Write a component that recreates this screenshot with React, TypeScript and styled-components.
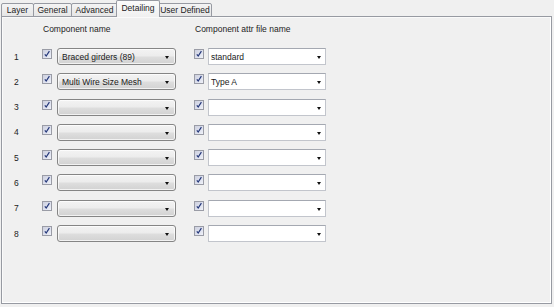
import styled, { createGlobalStyle } from "styled-components";

const GlobalStyle = createGlobalStyle`
  html, body {
    margin: 0;
    padding: 0;
    background: #f0f0f0;
  }
  body {
    font-family: "Liberation Sans", Arial, sans-serif;
    font-size: 8.5px;
    color: #1e1e1e;
  }
`;

const tabs = [
  { label: "Layer", width: 33 },
  { label: "General", width: 39 },
  { label: "Advanced", width: 47 },
  { label: "Detailing", width: 44 },
  { label: "User Defined", width: 54 },
];

const rows = [
  { name: "Braced girders (89)", attr: "standard" },
  { name: "Multi Wire Size Mesh", attr: "Type A" },
  { name: "", attr: "" },
  { name: "", attr: "" },
  { name: "", attr: "" },
  { name: "", attr: "" },
  { name: "", attr: "" },
  { name: "", attr: "" },
];

const Window = styled.div`
  width: 554px;
  height: 307px;
  padding-left: 1px;
  box-sizing: border-box;
  background: #f0f0f0;
`;

const TabStrip = styled.div`
  position: relative;
  z-index: 1;
  display: flex;
  align-items: flex-end;
  height: 17px;
`;

const Tab = styled.div<{ $width: number; $active?: boolean }>`
  box-sizing: border-box;
  width: ${(p) => p.$width}px;
  height: ${(p) => (p.$active ? 17 : 14)}px;
  margin-left: ${(p) => (p.$active ? -2 : -1)}px;
  margin-right: ${(p) => (p.$active ? -1 : 0)}px;
  position: relative;
  z-index: ${(p) => (p.$active ? 2 : 1)};
  border: 1px solid #979aa2;
  border-bottom: ${(p) => (p.$active ? "none" : "1px solid #979aa2")};
  border-radius: 2px 2px 0 0;
  background: ${(p) =>
    p.$active
      ? "linear-gradient(#fbfbfb, #f0f0f0)"
      : "linear-gradient(#f4f4f4, #e6e6e6)"};
  display: flex;
  align-items: center;
  justify-content: center;
  padding-bottom: ${(p) => (p.$active ? 2 : 0)}px;
  white-space: nowrap;
  color: #222;

  &:first-child {
    margin-left: 0;
  }
`;

const Panel = styled.div`
  box-sizing: border-box;
  width: 551px;
  height: 288px;
  margin-top: -1px;
  border: 1px solid #979aa2;
  box-shadow: inset -1px -1px 0 #ffffff, inset 1px 1px 0 #fafafa;
  background: #f0f0f0;
  padding: 7px 0 0 11px;
`;

const HeaderRow = styled.div`
  display: flex;
  height: 10px;
  line-height: 10px;
  color: #222;
`;

const HeaderCell = styled.div<{ $width: number }>`
  width: ${(p) => p.$width}px;
  flex: none;
`;

const RowList = styled.div`
  display: grid;
  grid-auto-rows: 17px;
  row-gap: 8.3px;
  margin-top: 14px;
`;

const Row = styled.div`
  display: flex;
  align-items: center;
`;

const Num = styled.div`
  width: 29px;
  flex: none;
  padding-left: 1px;
  box-sizing: border-box;
  color: #222;
`;

const CheckCell = styled.div<{ $width: number }>`
  width: ${(p) => p.$width}px;
  flex: none;
  display: flex;
  align-items: center;
  align-self: flex-start;
  padding-top: 1px;
`;

const CheckBox = styled.div`
  box-sizing: border-box;
  width: 10px;
  height: 10px;
  border: 1px solid #9a9ca6;
  background: linear-gradient(135deg, #cdd0de 0%, #dfe2ef 60%, #f0f2f8 100%);
  display: flex;
  align-items: center;
  justify-content: center;

  svg {
    display: block;
  }
`;

const Combo = styled.div<{ $editable?: boolean }>`
  box-sizing: border-box;
  height: 17px;
  flex: none;
  width: ${(p) => (p.$editable ? 118 : 119)}px;
  display: flex;
  align-items: center;
  position: relative;
  padding-left: ${(p) => (p.$editable ? 2 : 4)}px;
  border: 1px solid ${(p) => (p.$editable ? "#c2c5cc" : "#858585")};
  border-top-color: ${(p) => (p.$editable ? "#a4a8b1" : "#858585")};
  border-radius: ${(p) => (p.$editable ? 0 : 3)}px;
  background: ${(p) =>
    p.$editable
      ? "#ffffff"
      : "linear-gradient(#f3f3f3 0%, #ececec 48%, #dedede 52%, #d2d2d2 100%)"};
  box-shadow: ${(p) => (p.$editable ? "none" : "inset 0 0 0 1px rgba(255,255,255,0.7)")};
  color: #1a1a1a;
  white-space: nowrap;
`;

const Arrow = styled.span<{ $right: number }>`
  position: absolute;
  right: ${(p) => p.$right}px;
  top: 7px;
  width: 0;
  height: 0;
  border-left: 2.5px solid transparent;
  border-right: 2.5px solid transparent;
  border-top: 3px solid #111;
`;

const Gap = styled.div<{ $width: number }>`
  width: ${(p) => p.$width}px;
  flex: none;
`;

const Check = () => (
  <CheckBox>
    <svg width="8" height="8" viewBox="0 0 8 8">
      <path d="M1.8 4.4 L3.2 6 L6.4 1.2" fill="none" stroke="#26397a" strokeWidth="1.2" />
    </svg>
  </CheckBox>
);

export default function App() {
  return (
    <Window>
      <GlobalStyle />
      <TabStrip>
        {tabs.map((t) => (
          <Tab key={t.label} $width={t.width} $active={t.label === "Detailing"}>
            {t.label}
          </Tab>
        ))}
      </TabStrip>
      <Panel>
        <HeaderRow>
          <HeaderCell $width={30} />
          <HeaderCell $width={152}>Component name</HeaderCell>
          <HeaderCell $width={140}>Component attr file name</HeaderCell>
        </HeaderRow>
        <RowList>
          {rows.map((r, i) => (
            <Row key={i}>
              <Num>{i + 1}</Num>
              <CheckCell $width={15}>
                <Check />
              </CheckCell>
              <Combo>
                {r.name}
                <Arrow $right={6} />
              </Combo>
              <Gap $width={18} />
              <CheckCell $width={14}>
                <Check />
              </CheckCell>
              <Combo $editable>
                {r.attr}
                <Arrow $right={4} />
              </Combo>
            </Row>
          ))}
        </RowList>
      </Panel>
    </Window>
  );
}
